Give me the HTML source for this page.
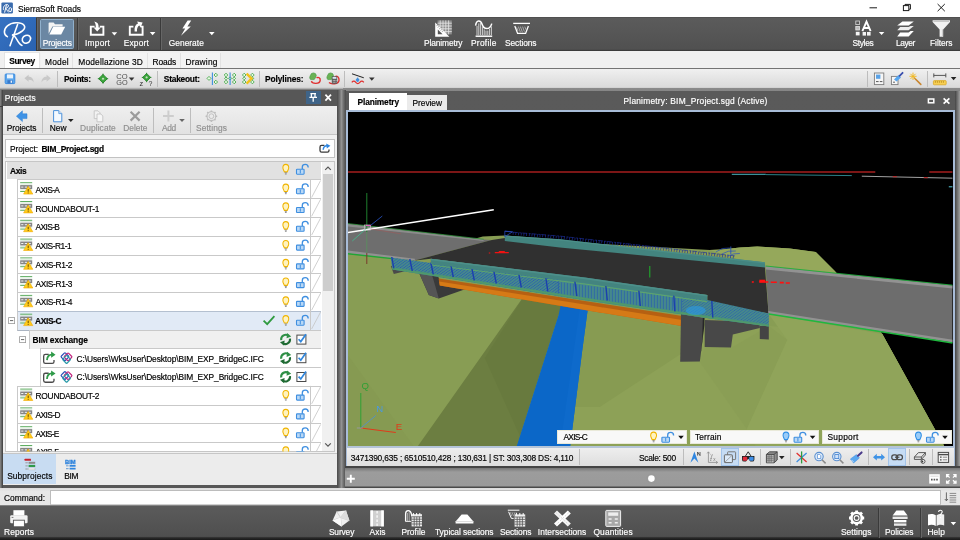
<!DOCTYPE html>
<html>
<head>
<meta charset="utf-8">
<title>SierraSoft Roads</title>
<style>
*{box-sizing:border-box;margin:0;padding:0}
html,body{width:960px;height:540px;overflow:hidden;background:#575757}
body{font-family:"Liberation Sans",sans-serif;font-size:11px;color:#000;position:relative}
.a{position:absolute}
.t{position:absolute;white-space:nowrap;line-height:14px;height:14px;font-size:8.4px;-webkit-text-stroke:0.17px}
.w{color:#fff}
.b{font-weight:bold}
.g{color:#8f8f8f}
.clipf{clip-path:inset(0 0 8.1px 0)}
.sep{position:absolute;width:1px;background:#bdbdbd}
.dsep{position:absolute;background:#3a3a3a;border-right:1px solid #666;width:2px}
/* tree */
.row{position:absolute;left:17px;width:304px;height:19px;background:#fff;border-top:1px solid #c9c9c9;border-left:1px solid #c9c9c9}
.row .t{top:3px}
svg{position:absolute;overflow:visible}
</style>
</head>
<body>

<!-- ===== TITLE BAR ===== -->
<div class="a" id="titlebar" style="left:0;top:0;width:960px;height:17px;background:#fff"></div>

<!-- ===== RIBBON ===== -->
<div class="a" id="ribbon" style="left:0;top:17px;width:960px;height:34px;background:linear-gradient(#454545 0,#5b5b5b 3%,#565656 50%,#505050 95%,#3c3c3c 98%,#3a3a3a 100%)"></div>
<div class="a" style="left:0;top:17px;width:35.5px;height:33.6px;background:linear-gradient(135deg,#3672c2,#2a62b0)"></div>
<div class="a" style="left:40px;top:19px;width:34px;height:30px;background:#6b87a3;border:1px solid #90b0cc;border-radius:1.5px"></div>
<div class="dsep" style="left:36px;top:18px;height:32px"></div>
<div class="dsep" style="left:77px;top:18px;height:32px"></div>
<div class="dsep" style="left:160px;top:18px;height:32px"></div>

<!-- ===== TAB ROW ===== -->
<div class="a" id="tabrow" style="left:0;top:51px;width:960px;height:17.8px;background:#f0f0f0;border-bottom:0.9px solid #747474"></div>
<div class="a" style="left:3.6px;top:52.4px;width:36.6px;height:15.5px;background:#fff;border:1px solid #e4e4e4;border-bottom:none"></div>
<div class="a" style="left:41px;top:53px;width:32px;height:15px;background:#f3f3f3;border-right:1px solid #e2e2e2"></div>
<div class="a" style="left:73px;top:53px;width:75px;height:15px;background:#f3f3f3;border-right:1px solid #e2e2e2"></div>
<div class="a" style="left:148px;top:53px;width:33px;height:15px;background:#f3f3f3;border-right:1px solid #e2e2e2"></div>
<div class="a" style="left:181px;top:53px;width:40px;height:15px;background:#f3f3f3;border-right:1px solid #e2e2e2"></div>

<!-- ===== TOOLBAR ===== -->
<div class="a" id="toolbar" style="left:0;top:68.8px;width:960px;height:21.2px;background:linear-gradient(#f0f0f0 0,#dadada 87%,#b0b0b0 93%,#6a6a6a 100%)"></div>
<div class="sep" style="left:57px;top:71px;height:16px"></div>
<div class="sep" style="left:157px;top:71px;height:16px"></div>
<div class="sep" style="left:259px;top:71px;height:16px"></div>
<div class="sep" style="left:344px;top:71px;height:16px"></div>
<div class="sep" style="left:867px;top:71px;height:16px"></div>
<div class="sep" style="left:927px;top:71px;height:16px"></div>

<!-- ===== LEFT DOCK PANEL ===== -->
<div class="a" id="lpanel" style="left:0;top:90px;width:338px;height:398px;background:#575757"></div>
<div class="a" style="left:0;top:90px;width:3px;height:398px;background:linear-gradient(90deg,#8a8a8a,#3c3c3c)"></div>
<div class="a" style="left:0;top:105.5px;width:338px;height:1px;background:#3e3e3e"></div>
<div class="a" style="left:306px;top:91px;width:15px;height:13px;background:#3f6488"></div>
<!-- panel toolbar -->
<div class="a" style="left:3px;top:106px;width:334px;height:29px;background:linear-gradient(#efefef,#e2e2e2);border-bottom:1px solid #c4c4c4"></div>
<div class="sep" style="left:42px;top:108px;height:25px"></div>
<div class="sep" style="left:153px;top:108px;height:25px"></div>
<div class="sep" style="left:190px;top:108px;height:25px"></div>
<!-- panel body -->
<div class="a" style="left:3px;top:135px;width:334px;height:318px;background:#f0f0f0"></div>
<div class="a" style="left:5.4px;top:139.4px;width:329.4px;height:18.4px;background:#fff;border:1px solid #c2c2c2"></div>
<!-- tree list -->
<div class="a" id="tree" style="left:5.4px;top:160.6px;width:329.4px;height:291.4px;background:#fff;border:1px solid #c6c6c6;overflow:hidden"></div>
<div class="a" style="left:7px;top:162px;width:314px;height:17px;background:#e1e1e1"></div>
<!-- scrollbar -->
<div class="a" style="left:321.8px;top:162px;width:12.2px;height:289px;background:#f0f0f0"></div>
<div class="a" style="left:322.8px;top:174px;width:10.6px;height:116.8px;background:#cdcdcd"></div>

<!-- rows -->
<div class="row" style="top:179px"></div>
<div class="row" style="top:198px"></div>
<div class="row" style="top:217px"></div>
<div class="row" style="top:236px"></div>
<div class="row" style="top:255px"></div>
<div class="row" style="top:273px;height:20px"></div>
<div class="row" style="top:292px;height:20px"></div>
<div class="row" style="top:311px;background:#e1eaf6;border-top-color:#b4c0d0;border-bottom:1px solid #aab4c2;height:19.6px"></div>
<div class="row" style="top:330px;left:29px;width:292px;background:#f0f0f0"></div>
<div class="row" style="top:348px;left:40px;width:281px;height:20px"></div>
<div class="row" style="top:367px;left:40px;width:281px;height:20px"></div>
<div class="row" style="top:386px"></div>
<div class="row" style="top:405px"></div>
<div class="row" style="top:423px;height:20px"></div>
<div class="row" style="top:442px;height:9px;overflow:hidden"></div>

<!-- bottom tabs of panel -->
<div class="a" style="left:3px;top:453px;width:334px;height:31.5px;background:#ececec;border-top:1px solid #c6c6c6"></div>
<div class="a" style="left:3px;top:454px;width:53px;height:30px;background:#c8dcf2"></div>

<!-- ===== RIGHT DOC AREA ===== -->
<div class="a" id="rpanel" style="left:343px;top:88px;width:617px;height:400px;background:linear-gradient(#8a8a8a 0,#868686 2.6px,#5a5a5a 3.4px,#575757 100%)"></div>
<div class="a" style="left:955.4px;top:91px;width:4.6px;height:397px;background:linear-gradient(90deg,#444,#a0a0a0)"></div>
<div class="a" style="left:337.4px;top:90px;width:8.6px;height:398px;background:linear-gradient(90deg,#4a4a4a 0,#6a6a6a 25%,#929292 50%,#6a6a6a 75%,#4a4a4a 100%)"></div>
<div class="a" style="left:345px;top:466px;width:615px;height:22px;background:linear-gradient(#444 0,#444 1.6px,#7a7a7a 2.4px,#9c9c9c 6px,#9a9a9a 20px,#4a4a4a 21px,#4a4a4a 22px)"></div>
<div class="a" style="left:349px;top:93px;width:58px;height:17px;background:#fff"></div>
<div class="a" style="left:407px;top:95px;width:40px;height:15px;background:#ebebeb"></div>

<!-- viewport -->
<div class="a" id="vp" style="left:346.2px;top:110px;width:608.8px;height:338px;background:#000;border:2px solid #a8bcd8;border-bottom:2px solid #b4c4d8"></div>
<svg id="scene" style="left:348.2px;top:112px;will-change:transform" width="604.5" height="334" viewBox="348.2 112 604.5 334">
<defs>
<clipPath id="vc"><rect x="348.2" y="112" width="604.5" height="334"/></clipPath>
<pattern id="mesh" width="3.2" height="3.2" patternUnits="userSpaceOnUse" patternTransform="rotate(8)">
<path d="M0,3.2 L3.2,0" stroke="#2452b8" stroke-width="0.75"/>
</pattern>
<pattern id="bars" width="3" height="4" patternUnits="userSpaceOnUse" patternTransform="skewY(8)">
<rect x="0" y="0" width="0.9" height="4" fill="#2250b8"/>
</pattern>
<linearGradient id="gird" x1="0" y1="0" x2="0.12" y2="1">
<stop offset="0" stop-color="#d87f1e"/><stop offset="0.55" stop-color="#cf761a"/><stop offset="0.6" stop-color="#a85b12"/><stop offset="1" stop-color="#a05510"/>
</linearGradient>
</defs>
<g clip-path="url(#vc)">
<!-- terrain -->
<polygon points="348,246 470,240 483,236.5 505,235.5 600,244 710,250 722,249.5 740,247.5 757.5,246.5 790,248.5 816,252 835,271 860,300 882.5,334 946,449 348,449" fill="#889d54"/>
<!-- subtle terrain facets -->
<polygon points="348,355 416,449 348,449" fill="#869a52"/>
<polygon points="588,309 682,328 769,326 882.5,334 946,449 570,449 582.5,350" fill="#8da157"/>
<polygon points="588,309 682,328 681,354 600,407 575,407 582.5,350" fill="#879b52"/>
<polygon points="700,362 747,429 787.5,340 769,326 733,347 705,347" fill="#8a9e55"/>
<polygon points="769,314 882.5,334 946,449 757,449 747,429 787.5,340" fill="#90a45a"/>
<polygon points="710,250 722,249.5 740,247.5 757.5,246.5 790,248.5 816,252 835,271 860,300 766,268" fill="#95a85b"/>
<!-- dark wedge -->
<polygon points="527,292 416,449 516,449 558.75,315 563,303" fill="#6c7e41"/>
<polygon points="527,292 485,358 526,449 516,449 558.75,315 563,303" fill="#687a3e"/>
<!-- river -->
<polygon points="561,305 588,309 582.5,350 570,449 516,449 558.75,315" fill="#0b67c8"/>
<polygon points="580,308 588,309 582.5,350 570,449 560,449" fill="#0e6acb"/>
<!-- left gray road -->
<polygon points="348,223.75 483.75,239.5 492,240 415,260.5 348,253" fill="#6e6e6e"/>
<polygon points="348,223.75 483.75,239.5 483.75,241 348,226.4" fill="#8c8c8c"/>
<path d="M348,223.5 L484,239.3" stroke="#2f8f3a" stroke-width="0.8" fill="none"/>
<path d="M348,253.6 L392,258.2" stroke="#20a535" stroke-width="1.9" fill="none"/>
<polygon points="348,250.6 415,258.8 415,260.5 348,253" fill="#929292"/>
<!-- deck (dark asphalt) -->
<polygon points="492,240 505,238 560,246 765,266 768.75,313.5 707.5,302.5 707.5,295 560,275 431,258.75 415,260.5" fill="#303030"/>
<!-- far-side barrier -->
<polygon points="505,235.5 560,239.2 765,262.3 765.5,267.5 560,247.5 505,241" fill="#43847f"/>
<polygon points="505,235.5 560,239.2 765,262.3 765,263.6 560,240.6 505,237" fill="#4b8e88"/>
<path d="M513,233.4 L560,237.4 L735,257.2" stroke="#1c2e9c" stroke-width="2.8" stroke-dasharray="0.7 2" fill="none" opacity="0.9"/>
<path d="M513,232.2 L560,236.1 L735,255.9" stroke="#1c2e9c" stroke-width="0.7" stroke-dasharray="5 1.5 2 1" fill="none" opacity="0.9"/>
<path d="M505,231.2 L505,236.6 L512.5,232 Z M505,231.2 L513,231.8" stroke="#2444b0" stroke-width="0.8" fill="none"/>
<path d="M716,252 q6,-5 14,-4 M722,254 q6,-4 14,-3 M728,256 q6,-3 12,-2.5" stroke="#2a52c0" stroke-width="0.7" fill="none"/>
<path d="M731,246.5 L731,254" stroke="#2a52c0" stroke-width="0.9"/>
<!-- right gray road -->
<polygon points="765.75,266.25 953,285.5 953,342.5 768.75,313.75" fill="#6d6d6d"/>
<polygon points="765.75,266.25 953,285.5 953,288.4 766,269.6" fill="#929292"/>
<polygon points="768.5,311 953,339.8 953,342.5 768.75,313.75" fill="#929292"/>
<path d="M766,266 L953,285.2" stroke="#1fae3c" stroke-width="0.9" fill="none"/>
<path d="M769,314 L953,343" stroke="#1fb83e" stroke-width="1.4" fill="none"/>
<!-- left abutment -->
<polygon points="391,266 394,274 404,271.5 412,268" fill="#4a4a4a"/>
<polygon points="418,270 429,295 439,298.5 466,289 440,280 436,272" fill="#3a3a3a"/>
<polygon points="418,270 429,295 439,298.5 432,274" fill="#555"/>
<!-- orange girder -->
<polygon points="438.75,278.5 585,301 682.5,316 682,326 585,310 440,285.5" fill="#b66012"/>
<polygon points="439.3,281.4 585,304.6 682.3,320 682,326 585,310 440,285.5" fill="#d67a16"/>
<!-- right pier -->
<polygon points="681.2,314 680.4,361.8 700,361.4 702.8,340 704.5,318" fill="#484848"/>
<polygon points="700,361.4 704.6,325 704.6,318 703,318 702.4,340" fill="#262626"/>
<polygon points="704.9,320 704.9,347 731.2,347.4 733,334.5 760,328 760,322" fill="#484848"/>
<polygon points="760,326 760,339 769,339.5 769,326" fill="#444"/>
<!-- near-side railing band -->
<polygon points="391,257.5 431,263 585,282 707.5,300 769,313.5 769,326.6 707,318 585,300.2 392.5,269.6" fill="#468a8a"/>
<clipPath id="bl"><rect x="380" y="250" width="180" height="60"/></clipPath>
<clipPath id="br"><rect x="682" y="290" width="100" height="45"/></clipPath>
<g clip-path="url(#bl)" opacity="0.95"><polygon points="391,257.5 431,263 585,282 585,300.2 392.5,269.6" fill="url(#mesh)"/></g>
<g clip-path="url(#br)" opacity="0.75"><polygon points="585,282 707.5,300 769,313.5 769,326.6 707,318 585,300.2" fill="url(#mesh)"/></g>
<polygon points="556,281.5 684,298 684,313.6 556,296" fill="url(#bars)" opacity="0.75"/>
<path d="M431,265 L585,284 L707,301.6" stroke="#62a868" stroke-width="1.1" fill="none" opacity="0.9"/>
<polygon points="392.2,267 585,297.6 707,315.4 769,324.2 769,326.6 707,318 585,300.2 392.5,269.6" fill="#4a9276"/>
<!-- posts -->
<path d="M392,257 L394,268.5 M410,259 L412.5,271 M431,262.5 L433.5,274.5 M451,265 L453.5,277 M472,268 L474.5,280.5 M494,271 L496.5,283.5 M519,274 L521.5,287.5 M546,277.5 L548,291.5 M575,281 L577,296 M606,285.5 L607.5,300.5 M639,290 L640.5,306 M674,295 L675,311.5 M712,301 L713,318" stroke="#1b3fae" stroke-width="1.4" fill="none"/>
<!-- near-side top rail (teal barrier) -->
<polygon points="431,258.75 585,277.5 707.5,295 707.5,300.5 585,283 431,264" fill="#43847f"/>
<polygon points="431,258.75 585,277.5 707.5,295 707.5,296.6 585,279.2 431,260.3" fill="#4c8f8a"/>
<path d="M392.5,268.75 L585,298.75 L707,317 L769,326" stroke="#5aa35a" stroke-width="0.7" fill="none" opacity="0.8"/>
<!-- bright blue detail on railing -->
<ellipse cx="696" cy="310.5" rx="10" ry="4.5" fill="#2a9ae8" opacity="0.6"/>
<!-- red markers -->
<path d="M752,282 h2 M759.5,282 h9 M771,282.3 h6 M780,282.6 h4 M786,283 h4" stroke="#ff1010" stroke-width="1.6"/>
<path d="M759.5,281 h6" stroke="#ff1010" stroke-width="2.6"/>
<path d="M489,253 h1.5 M495,252.6 h14 M499,251.6 h6" stroke="#f01212" stroke-width="1.2"/>
<!-- small green tick on deck -->
<path d="M650,266 V277.5" stroke="#1fb52c" stroke-width="1"/>
<!-- horizon lines -->
<path d="M348,172 H875.5 M929.5,172 H953" stroke="#7c1616" stroke-width="1.8"/>
<path d="M732,174.3 H766" stroke="#55c8d6" stroke-width="0.9"/>
<path d="M766,174.6 L852,175.6" stroke="#2b8088" stroke-width="1"/>
<path d="M862,176.2 L953,178.2" stroke="#b4b4b4" stroke-width="0.9"/>
<path d="M893,176.6 h4 M924,177.6 h4" stroke="#b03030" stroke-width="1.4"/>
<path d="M949,186.8 h4" stroke="#55c8d6" stroke-width="1"/>
<!-- cursor/axes lines upper-left -->
<path d="M367,193 V232" stroke="#1e7f2e" stroke-width="1"/>
<path d="M367,232 V253" stroke="#5c8a60" stroke-width="1"/>
<path d="M367,253 V264" stroke="#7a3a2a" stroke-width="1"/>
<path d="M347.5,232.6 L494,209.8" stroke="#fff" stroke-width="1.5"/>
<path d="M370,226 L382.5,216" stroke="#2a55c8" stroke-width="0.8"/>
<path d="M352.5,241 L366,229" stroke="#3fbf8f" stroke-width="0.8"/>
<path d="M371,229 L401,233.8" stroke="#a05a5a" stroke-width="0.6"/>
<rect x="364.5" y="225" width="6" height="5" fill="none" stroke="#c9c9c9" stroke-width="0.7"/>
<path d="M366,225.5 h5" stroke="#e060c0" stroke-width="1"/>
<!-- gizmo -->
<path d="M361,428 V393" stroke="#2fa035" stroke-width="1"/>
<path d="M361,428 L376,415.5" stroke="#4a8fd8" stroke-width="0.8"/>
<path d="M361,428 L396,432.5" stroke="#e03a1a" stroke-width="1"/>
<path d="M357,428 h6" stroke="#9a9ab0" stroke-width="0.8"/>
<text x="361.6" y="389.4" font-family="Liberation Sans, sans-serif" font-size="9.6" fill="#2fa035">Q</text>
<text x="376.4" y="411.8" font-family="Liberation Sans, sans-serif" font-size="9.6" fill="#4a9ae0">N</text>
<text x="396" y="430.4" font-family="Liberation Sans, sans-serif" font-size="9.6" fill="#e03a1a">E</text>
</g>
</svg>


<!-- viewport status bar -->
<div class="a" id="vstatus" style="left:346.2px;top:448px;width:608.8px;height:18.2px;background:linear-gradient(#eeeeee,#dedede);border-left:1.6px solid #a8bcd8;border-right:1.6px solid #a8bcd8"></div>
<div class="sep" style="left:579px;top:449px;height:16px"></div>
<div class="sep" style="left:683px;top:449px;height:16px"></div>
<div class="sep" style="left:760px;top:449px;height:16px"></div>
<div class="sep" style="left:790px;top:449px;height:16px"></div>
<div class="sep" style="left:868px;top:449px;height:16px"></div>
<div class="sep" style="left:909px;top:449px;height:16px"></div>
<div class="sep" style="left:932px;top:449px;height:16px"></div>

<div class="a" style="left:721px;top:448px;width:18px;height:18px;background:#c6dcf4;border:1px solid #a3c4ea"></div>
<div class="a" style="left:888px;top:448px;width:18px;height:18px;background:#c6dcf4;border:1px solid #a3c4ea"></div>
<!-- dropdowns -->
<div class="a" style="left:557px;top:430px;width:130px;height:14px;background:#f8f8f8;border:1px solid #e9e9d9"></div>
<div class="a" style="left:690px;top:430px;width:129px;height:14px;background:#f8f8f8;border:1px solid #e9e9d9"></div>
<div class="a" style="left:822px;top:430px;width:130px;height:14px;background:#f8f8f8;border:1px solid #e9e9d9"></div>

<!-- ===== COMMAND ROW ===== -->
<div class="a" id="cmdrow" style="left:0;top:488px;width:960px;height:17.6px;background:linear-gradient(#dcdcdc,#e8e8e8 20%,#e6e6e6)"></div>
<div class="a" style="left:49.8px;top:490.2px;width:891px;height:15px;background:#fff;border:1px solid #bcbcbc;border-bottom-color:#d0d0d0"></div>

<!-- ===== BOTTOM RIBBON ===== -->
<div class="a" id="bribbon" style="left:0;top:505.2px;width:960px;height:34.8px;background:linear-gradient(#9a9a9a 0,#5a5a5a 1.4px,#5a5a5a 3px,#4f4f4f 31.4px,#2a2a2a 32.8px,#1a1a1a 34.8px)"></div>
<div class="dsep" style="left:878px;top:508px;height:30px"></div>
<div class="dsep" style="left:920px;top:508px;height:30px"></div>

<svg id="icons" style="left:0;top:0;will-change:transform" width="960" height="540" viewBox="0 0 960 540">
<defs>
<!-- reusable: yellow bulb, blue bulb, blue open lock, road+warning icon -->
<g id="bulbY" transform="scale(0.86,1)">
<path d="M0,-5 C2.6,-5 3.4,-3 3.4,-1.6 C3.4,0 2.2,1 1.7,2.4 L-1.7,2.4 C-2.2,1 -3.4,0 -3.4,-1.6 C-3.4,-3 -2.6,-5 0,-5 Z" fill="#fff3bf" stroke="#f0b400" stroke-width="1.2"/>
<path d="M-1.2,3.4 h2.4 M-1,4.6 h2" stroke="#7a7a7a" stroke-width="0.9" fill="none"/>
</g>
<g id="bulbB" transform="scale(0.86,1)">
<path d="M0,-5 C2.6,-5 3.4,-3 3.4,-1.6 C3.4,0 2.2,1 1.7,2.4 L-1.7,2.4 C-2.2,1 -3.4,0 -3.4,-1.6 C-3.4,-3 -2.6,-5 0,-5 Z" fill="#9accf8" stroke="#2f8fe6" stroke-width="1.2"/>
<path d="M-1.2,3.4 h2.4 M-1,4.6 h2" stroke="#7a7a7a" stroke-width="0.9" fill="none"/>
</g>
<g id="lock">
<rect x="0.5" y="5.6" width="7.6" height="5" rx="0.6" fill="#b9d8f6" stroke="#3f8fe0" stroke-width="1.1"/>
<path d="M4.3,6.4 v3.4" stroke="#3f8fe0" stroke-width="1"/>
<path d="M6.3,5.4 V3.4 C6.3,1 8,0.7 9.2,0.7 C10.8,0.7 12.2,1.6 12.2,3.8" fill="none" stroke="#3f8fe0" stroke-width="1.3"/>
</g>
<g id="road">
<path d="M0,0.6 h12" stroke="#5fae62" stroke-width="1"/>
<path d="M0,2 h12" stroke="#d7ead8" stroke-width="0.9"/>
<rect x="0" y="3" width="12" height="4" fill="#858585"/>
<path d="M1,5 h2.2 M4.6,5 h2.2 M8.4,5 h2.2" stroke="#f2f2f2" stroke-width="1"/>
<path d="M0,8 h12" stroke="#d7ead8" stroke-width="0.9"/>
<path d="M0,9.4 h5" stroke="#5fae62" stroke-width="1"/>
<path d="M8,4.2 L12.6,12 L3.4,12 Z" fill="#ffcc1a" stroke="#f0a800" stroke-width="0.6" stroke-linejoin="round"/>
<path d="M8,7 v2.6 M8,10.4 v0.9" stroke="#6b4a00" stroke-width="1"/>
</g>
<g id="sync" transform="scale(1.22)">
<path d="M-3.6,0.6 A3.8,3.8 0 0 1 2.6,-2.9" fill="none" stroke="#2e8f45" stroke-width="1.7"/>
<path d="M1.2,-5.2 L4.6,-2.4 L0.8,-0.9 Z" fill="#2e8f45"/>
<path d="M3.6,-0.6 A3.8,3.8 0 0 1 -2.6,2.9" fill="none" stroke="#1f6b33" stroke-width="1.7"/>
<path d="M-1.2,5.2 L-4.6,2.4 L-0.8,0.9 Z" fill="#1f6b33"/>
</g>
<g id="chk">
<rect x="0.5" y="0.5" width="9" height="9" fill="#fff" stroke="#4a4a4a" stroke-width="1"/>
<path d="M2.2,4.6 L4.4,7 L9.6,-0.4" fill="none" stroke="#2f86dd" stroke-width="1.7"/>
</g>
<g id="share" transform="scale(1.1)">
<path d="M5.2,2.4 H2.2 Q0.6,2.4 0.6,4 V9 Q0.6,10.6 2.2,10.6 H8.4 Q10,10.6 10,9 V7.4" fill="none" stroke="#4a4a4a" stroke-width="1.2"/>
<path d="M3.6,7.6 C3.8,4.6 5.6,2.6 8.2,2.6" fill="none" stroke="#2e9a48" stroke-width="1.6"/>
<path d="M7.4,-0.2 L11.4,2.6 L7.4,5.4 Z" fill="#2e9a48"/>
</g>
<g id="ifc" transform="scale(0.92)">
<rect x="-3.2" y="-3.2" width="6.4" height="6.4" rx="1" transform="translate(-1.6,-1.2) rotate(45)" fill="none" stroke="#2c4fb8" stroke-width="1.3"/>
<rect x="-3.2" y="-3.2" width="6.4" height="6.4" rx="1" transform="translate(1.8,-1) rotate(45)" fill="none" stroke="#c3267e" stroke-width="1.3"/>
<rect x="-3.2" y="-3.2" width="6.4" height="6.4" rx="1" transform="translate(0.2,1.8) rotate(45)" fill="none" stroke="#2a9aa8" stroke-width="1.3"/>
</g>
<path id="dd" d="M-2.8,-1.5 H2.8 L0,1.7 Z"/>
</defs>

<!-- ===== title bar ===== -->
<g transform="translate(-1.6,0.4)"><rect x="3" y="2" width="11.5" height="11" rx="1.2" fill="#3a6cae"/>
<path d="M5,9.4 C4.6,5.6 7,3.6 9.2,4.2 C11,4.8 9.8,7.4 7.2,8 M8,4.6 L6.2,12.2 M7.4,8 C8.8,8.6 8.8,11.4 10.2,11.6 M10.6,9 a1.3,1.5 0 1 0 2.4,0.6 a1.3,1.5 0 1 0 -2.4,-0.6" fill="none" stroke="#fff" stroke-width="1"/></g>
<path d="M869.5,7.8 h7.5" stroke="#1a1a1a" stroke-width="1"/>
<rect x="903.4" y="5.6" width="5.4" height="5" fill="none" stroke="#1a1a1a" stroke-width="1"/>
<path d="M905,5.4 V4.4 H910.4 V9.2 H909" fill="none" stroke="#1a1a1a" stroke-width="1"/>
<path d="M937.6,4 L944.8,11.2 M944.8,4 L937.6,11.2" stroke="#1a1a1a" stroke-width="1"/>

<!-- ===== ribbon ===== -->
<!-- Ro logo -->
<g fill="none" stroke="#fff" stroke-width="1.55" stroke-linecap="round">
<path d="M7.4,36.6 C3.6,35 3.2,29.4 7.4,25.8 C11.6,22.2 21,21.6 24,25.2 C26.6,28.6 21,33.6 12.6,35"/>
<path d="M17.6,24.4 L10,45.8"/>
<path d="M12.6,35 C16.4,35.4 17.4,44.2 22,45.4"/>
<path d="M22.4,38.6 C23.4,35.6 27.4,34.4 29.6,36.2 C31.6,38 30.2,42.2 27,43 C24,43.8 21.6,41.6 22.4,38.6 Z"/>
</g>
<!-- folder -->
<path d="M48.6,33.8 V23.2 Q48.6,22.4 49.4,22.4 H53.6 L55,24.2 H62.6 V26.4 H52.4 Z" fill="#f4f4f4"/>
<path d="M49.4,34.4 L53.2,26.8 H65.2 L61.2,34.4 Z" fill="#fff"/>
<!-- import -->
<path d="M94.6,26.6 H90.8 V34.8 H103.4 V26.6 H99.8" fill="none" stroke="#fff" stroke-width="1.9"/>
<path d="M94.2,21.6 C97.4,22 98.8,24.2 98.6,27.4 L100.8,27.4 L97.2,31.6 L93.6,27.4 L95.8,27.4 C95.8,25 95.4,23.2 94.2,21.6 Z" fill="#fff"/>
<use href="#dd" x="114.4" y="33.8" fill="#fff"/>
<!-- export -->
<path d="M133.4,26.6 H129.8 V34.8 H142.6 V26.6 H140.6" fill="none" stroke="#fff" stroke-width="1.9"/>
<path d="M134.6,31.4 C134.2,27.2 135.4,24.4 138,23.4 L137.2,21.4 L142.6,22.4 L140.6,27.4 L139.4,25.6 C137.6,26.4 136.8,28.6 137,31.4 Z" fill="#fff"/>
<use href="#dd" x="152.6" y="33.6" fill="#fff"/>
<!-- generate (lightning) -->
<path d="M187.6,20.6 L191.2,20.6 L187.4,26.4 L190.8,26.4 L181,35.8 L185.2,28.6 L182.4,28.6 Z" fill="#fff"/>
<use href="#dd" x="211.8" y="33.6" fill="#fff"/>
<!-- planimetry -->
<g>
<rect x="437.6" y="20.4" width="14.2" height="14" fill="#8e8e8e"/>
<path d="M440.2,20.4 v14 M443,20.4 v14 M445.8,20.4 v14 M448.6,20.4 v14 M437.6,23.2 h14.2 M437.6,26 h14.2 M437.6,28.8 h14.2 M437.6,31.6 h14.2" stroke="#e8e8e8" stroke-width="0.8"/>
<path d="M435.2,22.6 L435.2,36.8 L449.4,36.8 Z" fill="#fff"/>
<path d="M437.8,29.4 L437.8,34.2 L442.6,34.2 Z" fill="#555"/>
<path d="M436.4,25.8 l1.6,-1 M437.6,27.4 l1.6,-1 M439,29 l1.6,-1 M440.4,30.4 l1.6,-1 M441.8,31.8 l1.6,-1" stroke="#777" stroke-width="0.6"/>
</g>
<!-- profile -->
<g fill="none" stroke="#fff">
<path d="M475.6,25.6 C476.4,19.6 480.6,19.6 482.2,24.6 C483.8,29.6 489.6,30.6 491.8,23.6" stroke-width="1.5"/>
<path d="M477,26 v9 M478.8,23.4 v11.6 M480.6,23 v12 M482.4,26.6 v8.4 M484.2,29.4 v5.6 M486,30.6 v4.4 M487.8,30.6 v4.4 M489.6,29 v6 M491.4,26.4 v8.6" stroke-width="0.9" stroke="#dcdcdc"/>
<path d="M475.6,36.2 h16.6" stroke-width="1.5"/>
</g>
<!-- sections -->
<g fill="none" stroke="#fff">
<path d="M513.2,23.4 h16.8" stroke-width="1.3"/>
<path d="M514.8,26 L517.6,33.4 H525.6 L528.4,26" stroke-width="1.3"/>
<path d="M516.6,27.4 l1.4,3.6 M518.4,26.6 l2,5.6 M520.4,26.6 l2,5.6 M522.6,26.6 l1.8,5 M524.8,26.6 l1.2,3.2" stroke="#cfcfcf" stroke-width="0.7"/>
</g>
<!-- styles -->
<g>
<rect x="855.8" y="21" width="3.8" height="3.6" fill="none" stroke="#d8d8d8" stroke-width="0.8"/>
<rect x="855.8" y="26.4" width="3.8" height="3.6" fill="#bdbdbd" stroke="#e4e4e4" stroke-width="0.8"/>
<rect x="855.8" y="31.8" width="3.8" height="3.6" fill="#f4f4f4"/>
<path d="M862.4,31.2 L866.5,21.6 L870.6,31.2 M863.8,28 H869.2" fill="none" stroke="#fff" stroke-width="1.9"/>
<rect x="862.6" y="32" width="3.4" height="3.6" fill="#f4f4f4"/>
<rect x="867" y="32" width="3.6" height="3.6" fill="#f4f4f4"/>
</g>
<use href="#dd" x="881.6" y="33.4" fill="#fff"/>
<!-- layer -->
<g>
<path d="M902.4,21.4 H913.8 L908.6,25.4 H897.2 Z" fill="#fff"/>
<path d="M910.6,26 L913.8,26 L908.6,30.2 H897.2 L900.2,27 H908.6 Z" fill="#ededed"/>
<path d="M910.6,31 L913.8,31 L908.6,36.6 H897.2 L900.2,32.6 H908.6 Z" fill="#fff"/>
</g>
<!-- filters -->
<path d="M932.6,20.2 H950 V22 L943.2,29.6 V36.8 H939.6 V29.6 L932.6,22 Z" fill="#f2f2f2"/>
<path d="M933.4,21.4 H949.2" stroke="#bdbdbd" stroke-width="0.9"/>
<path d="M942.4,29.4 V36.6" stroke="#c9c9c9" stroke-width="1"/>

<!-- ===== toolbar icons ===== -->
<!-- save -->
<rect x="5.2" y="74" width="9.6" height="9.6" rx="0.8" fill="#5ba6ec" stroke="#3a8be0" stroke-width="1"/>
<rect x="7" y="74.4" width="6" height="4" fill="#e9f3fd"/>
<rect x="7.4" y="80.2" width="5.2" height="3.2" fill="#3a78c8"/>
<rect x="10.6" y="80.6" width="1.4" height="2.2" fill="#e9f3fd"/>
<!-- undo / redo (disabled) -->
<path d="M24.4,78.2 L28.6,74.8 V76.8 C31.6,76.8 33.6,78.6 33.6,82.4 C32.4,80.4 31,79.8 28.6,79.8 V81.8 Z" fill="#c6c6c6"/>
<path d="M50.8,78.2 L46.6,74.8 V76.8 C43.6,76.8 41.6,78.6 41.6,82.4 C42.8,80.4 44.2,79.8 46.6,79.8 V81.8 Z" fill="#c9c9c9"/>
<!-- points: green diamond -->
<g id="gdia">
<path d="M103,74.4 L107.4,78.7 L103,83 L98.6,78.7 Z" fill="#3aa83a" stroke="#1f7f24" stroke-width="0.8"/>
<circle cx="103" cy="78.7" r="1.5" fill="#bfe8b8" stroke="#1f7f24" stroke-width="0.5"/>
<path d="M103,73.6 v2 M103,81.8 v2 M97.8,78.7 h2 M106.2,78.7 h2" stroke="#1f7f24" stroke-width="0.8"/>
</g>
<!-- COGO -->
<text x="116.2" y="79" font-family="Liberation Sans, sans-serif" font-size="6.6" fill="#4f4f4f" textLength="11.4" lengthAdjust="spacingAndGlyphs">CO</text>
<text x="116.2" y="84.8" font-family="Liberation Sans, sans-serif" font-size="6.6" fill="#4f4f4f" textLength="11.4" lengthAdjust="spacingAndGlyphs">GO</text>
<use href="#dd" x="131.6" y="79" fill="#333"/>
<!-- point z? -->
<path d="M146.6,73.4 L150.6,77.4 L146.6,81.4 L142.6,77.4 Z" fill="#3aa83a" stroke="#1f7f24" stroke-width="0.8"/>
<circle cx="146.6" cy="77.4" r="1.4" fill="#bfe8b8" stroke="#1f7f24" stroke-width="0.5"/>
<path d="M146.6,72.8 v1.6 M146.6,80.6 v1.6 M141.8,77.4 h1.6 M149.8,77.4 h1.6" stroke="#1f7f24" stroke-width="0.8"/>
<text x="139.6" y="85.6" font-family="Liberation Sans, sans-serif" font-size="7.4" fill="#333">z</text>
<text x="148.4" y="85.8" font-family="Liberation Sans, sans-serif" font-size="7" fill="#333">?</text>
<!-- stakeout 1 -->
<g fill="#e9f8e4" stroke="#35a23b" stroke-width="0.8">
<path d="M209,76.4 l2,2 l-2,2 l-2,-2 Z M215.8,73.2 l1.8,1.8 l-1.8,1.8 l-1.8,-1.8 Z M215.8,80.2 l1.8,1.8 l-1.8,1.8 l-1.8,-1.8 Z"/>
</g>
<path d="M212.4,72.4 V85" stroke="#3f8fe0" stroke-width="1.1"/>
<!-- stakeout 2 -->
<g fill="#e9f8e4" stroke="#35a23b" stroke-width="0.8">
<path d="M226,73.2 l1.8,1.8 l-1.8,1.8 l-1.8,-1.8 Z M226,80.2 l1.8,1.8 l-1.8,1.8 l-1.8,-1.8 Z M234.2,73.2 l1.8,1.8 l-1.8,1.8 l-1.8,-1.8 Z M234.2,80.2 l1.8,1.8 l-1.8,1.8 l-1.8,-1.8 Z M230.1,76.8 l1.6,1.6 l-1.6,1.6 l-1.6,-1.6 Z M226,77 l1.4,1.4 l-1.4,1.4 l-1.4,-1.4 Z M234.2,77 l1.4,1.4 l-1.4,1.4 l-1.4,-1.4 Z"/>
</g>
<path d="M230.1,72.4 V85" stroke="#3f8fe0" stroke-width="1.1"/>
<!-- stakeout 3 -->
<g fill="#e9f8e4" stroke="#35a23b" stroke-width="0.8">
<path d="M244.2,73.2 l1.8,1.8 l-1.8,1.8 l-1.8,-1.8 Z M244.2,80.2 l1.8,1.8 l-1.8,1.8 l-1.8,-1.8 Z M252.4,73.2 l1.8,1.8 l-1.8,1.8 l-1.8,-1.8 Z M252.4,80.2 l1.8,1.8 l-1.8,1.8 l-1.8,-1.8 Z M244.2,77 l1.4,1.4 l-1.4,1.4 l-1.4,-1.4 Z M252.4,77 l1.4,1.4 l-1.4,1.4 l-1.4,-1.4 Z"/>
</g>
<path d="M246.6,73.6 L251.6,78.6 L246.6,83.6" fill="none" stroke="#f2c21a" stroke-width="2.4"/>
<!-- polylines 1 -->
<path d="M311.4,73.6 q2,-1.4 4,0 q1.6,1.6 0.4,3.6 l-1.6,2.4 h-3.6 q-1.6,-1.6 -0.6,-3.4 Z" fill="#6ab254" stroke="#3f9540" stroke-width="0.6"/>
<path d="M311.4,81.2 C312,84 319.8,84.4 320.2,80.4 C320.6,77.4 317.6,76.8 316.6,78" fill="none" stroke="#e03030" stroke-width="1.4"/>
<!-- polylines 2 -->
<path d="M328.6,73.6 q2,-1.4 4,0 q1.6,1.6 0.4,3.6 l-1.6,2.4 h-3.6 q-1.6,-1.6 -0.6,-3.4 Z" fill="#6ab254" stroke="#3f9540" stroke-width="0.6"/>
<path d="M329,82.6 C331,84.6 338.6,84.4 339,80.4 C339.4,76.6 336.6,75.6 335.4,76.6" fill="none" stroke="#e03030" stroke-width="1.4"/>
<rect x="331.8" y="76.2" width="5.4" height="7.6" rx="0.6" fill="#5a5a5a"/>
<rect x="332.6" y="77" width="3.8" height="1.8" fill="#d9e6f2"/>
<path d="M332.8,80.4 h0.9 M334.2,80.4 h0.9 M335.6,80.4 h0.9 M332.8,82.2 h0.9 M334.2,82.2 h0.9 M335.6,82.2 h0.9" stroke="#e8e8e8" stroke-width="0.8"/>
<!-- slope tool -->
<path d="M352,73.8 L363.8,77.8" stroke="#222" stroke-width="1"/>
<path d="M351.8,82.4 q2,-2.4 4,0 q2,2.4 4,0 q2,-2.4 4,0" fill="none" stroke="#e03030" stroke-width="1.2"/>
<path d="M357.6,77.2 l2.2,3 h-4.4 Z" fill="#3f8fe0"/>
<circle cx="357.6" cy="80.6" r="1.4" fill="#3f8fe0"/>
<use href="#dd" x="371.8" y="79" fill="#333"/>
<!-- right tool group -->
<rect x="874.4" y="73" width="9.4" height="11.6" fill="#f6f6f6" stroke="#7d7d7d" stroke-width="0.9"/>
<rect x="876" y="74.6" width="4.4" height="4.2" fill="#5aa2e6"/>
<path d="M876,81.6 h2.6 M879.8,81.6 h2.6" stroke="#555" stroke-width="1"/>
<rect x="891.4" y="76.4" width="6.6" height="8.2" fill="#f6f6f6" stroke="#7d7d7d" stroke-width="0.9"/>
<path d="M893,82.2 h2" stroke="#555" stroke-width="0.9"/>
<path d="M894,79.6 L898.4,75 L901,77.6 L896.6,81.4 Z" fill="#58a6ee"/>
<path d="M899.6,75.8 L902.6,72.8" stroke="#3a4fae" stroke-width="1.8" stroke-linecap="round"/>
<path d="M914.4,78 L920.8,84.4" stroke="#c9862f" stroke-width="1.6" stroke-linecap="round"/>
<path d="M913,72.6 v7.4 M909.4,76.3 h7.2 M910.4,73.8 l5.2,5.2 M915.6,73.8 l-5.2,5.2" stroke="#f2b71a" stroke-width="0.9"/>
<!-- ruler -->
<rect x="933.4" y="80.6" width="12.8" height="4.2" rx="0.8" fill="#f7cf52" stroke="#d9a31a" stroke-width="0.7"/>
<path d="M935.4,81 v1.8 M937.4,81 v1.8 M939.4,81 v1.8 M941.4,81 v1.8 M943.4,81 v1.8" stroke="#a87a10" stroke-width="0.6"/>
<path d="M933.8,75.4 H945.8 M933.8,73.4 v4 M945.8,73.4 v4" stroke="#555" stroke-width="1" fill="none"/>
<use href="#dd" x="953.6" y="78.6" fill="#222"/>
<!-- ===== left panel header icons ===== -->
<path d="M310.4,93.6 h5.6 M311.4,93.6 v3.6 M315,93.6 v3.6 M309.4,97.4 h7.6 M313.2,97.4 v4.4" stroke="#fff" stroke-width="1.3" fill="none"/>
<path d="M325.4,94.6 L331,100.6 M331,94.6 L325.4,100.6" stroke="#fff" stroke-width="1.7"/>
<!-- panel toolbar -->
<path d="M16.4,116.2 L22.4,110.8 V113.8 H27 V118.6 H22.4 V121.6 Z" fill="#3f93e6" stroke="#2f7fd0" stroke-width="0.5"/>
<path d="M53.6,110.6 H58.8 L61.8,113.6 V121.8 H53.6 Z" fill="#f4f9fe" stroke="#4a90d9" stroke-width="1"/>
<path d="M58.8,110.6 V113.6 H61.8" fill="#cfe2f6" stroke="#4a90d9" stroke-width="0.8"/>
<use href="#dd" x="70.8" y="120.4" fill="#222"/>
<path d="M94.2,110.8 H98 L100,112.8 V118.6 H94.2 Z" fill="#f2f2f2" stroke="#c4c4c4" stroke-width="0.9"/>
<path d="M97,114 H100.8 L102.8,116 V121.8 H97 Z" fill="#f6f6f6" stroke="#c4c4c4" stroke-width="0.9"/>
<path d="M130.6,111.8 L139.6,120.6 M139.6,111.8 L130.6,120.6" stroke="#9c9c9c" stroke-width="2.2"/>
<path d="M168.4,110.6 V121.6 M163,116.1 H173.8" stroke="#cdcdcd" stroke-width="2"/>
<use href="#dd" x="182" y="120.4" fill="#666"/>
<g fill="none" stroke="#bdbdbd">
<circle cx="211.4" cy="116.2" r="4.4" stroke-width="1.1"/>
<circle cx="211.4" cy="116.2" r="2.4" stroke-width="0.9"/>
<path d="M211.4,110.4 v1.6 M211.4,120.4 v1.6 M205.6,116.2 h1.6 M215.6,116.2 h1.6 M207.3,112.1 l1.1,1.1 M214.4,119.2 l1.1,1.1 M215.5,112.1 l-1.1,1.1 M208.4,119.2 l-1.1,1.1" stroke-width="1.6"/>
</g>
<!-- project field share icon -->
<path d="M324.4,145.4 H321.6 Q320,145.4 320,147 V150.6 Q320,152.2 321.6,152.2 H327.4 Q329,152.2 329,150.6 V149.6" fill="none" stroke="#3a3a3a" stroke-width="1.3"/>
<path d="M323.2,149.8 C323.4,147.2 325,145.8 327,145.8" fill="none" stroke="#2f86e0" stroke-width="1.5"/>
<path d="M326.2,143.4 L330.4,145.8 L326.8,148.6 Z" fill="#2f86e0"/>
<!-- scrollbar arrows -->
<path d="M325.2,169.8 L328,167 L330.8,169.8" fill="none" stroke="#555" stroke-width="1.2"/>
<path d="M325.2,443.4 L328,446.2 L330.8,443.4" fill="none" stroke="#555" stroke-width="1.2"/>
<!-- header row icons -->
<use href="#bulbY" x="285.8" y="169.4"/>
<use href="#lock" x="296" y="163.6"/>
<!-- tree rows: road icons, bulbs, locks, diagonal cells -->
<clipPath id="treeclip"><rect x="6" y="161" width="316" height="290.4"/></clipPath>
<g id="rowicons" clip-path="url(#treeclip)">
<use href="#road" x="20.2" y="182.1"/>
<use href="#bulbY" x="285.8" y="189.1"/>
<use href="#lock" x="296" y="183.1"/>
<path d="M311.6,197.5 L320.6,180.5" stroke="#c4c4c4" stroke-width="0.8"/><path d="M310.5,179.5 v19" stroke="#c9c9c9" stroke-width="1"/>
<use href="#road" x="20.2" y="200.9"/>
<use href="#bulbY" x="285.8" y="207.9"/>
<use href="#lock" x="296" y="201.9"/>
<path d="M311.6,216.3 L320.6,199.3" stroke="#c4c4c4" stroke-width="0.8"/><path d="M310.5,198.3 v19" stroke="#c9c9c9" stroke-width="1"/>
<use href="#road" x="20.2" y="219.7"/>
<use href="#bulbY" x="285.8" y="226.7"/>
<use href="#lock" x="296" y="220.7"/>
<path d="M311.6,235.1 L320.6,218.1" stroke="#c4c4c4" stroke-width="0.8"/><path d="M310.5,217.1 v19" stroke="#c9c9c9" stroke-width="1"/>
<use href="#road" x="20.2" y="238.5"/>
<use href="#bulbY" x="285.8" y="245.5"/>
<use href="#lock" x="296" y="239.5"/>
<path d="M311.6,253.9 L320.6,236.9" stroke="#c4c4c4" stroke-width="0.8"/><path d="M310.5,235.9 v19" stroke="#c9c9c9" stroke-width="1"/>
<use href="#road" x="20.2" y="257.3"/>
<use href="#bulbY" x="285.8" y="264.3"/>
<use href="#lock" x="296" y="258.3"/>
<path d="M311.6,272.7 L320.6,255.7" stroke="#c4c4c4" stroke-width="0.8"/><path d="M310.5,254.7 v19" stroke="#c9c9c9" stroke-width="1"/>
<use href="#road" x="20.2" y="276.0"/>
<use href="#bulbY" x="285.8" y="283.0"/>
<use href="#lock" x="296" y="277.0"/>
<path d="M311.6,291.4 L320.6,274.4" stroke="#c4c4c4" stroke-width="0.8"/><path d="M310.5,273.4 v19" stroke="#c9c9c9" stroke-width="1"/>
<use href="#road" x="20.2" y="294.8"/>
<use href="#bulbY" x="285.8" y="301.8"/>
<use href="#lock" x="296" y="295.8"/>
<path d="M311.6,310.2 L320.6,293.2" stroke="#c4c4c4" stroke-width="0.8"/><path d="M310.5,292.2 v19" stroke="#c9c9c9" stroke-width="1"/>
<use href="#road" x="20.2" y="313.6"/>
<use href="#bulbY" x="285.8" y="320.6"/>
<use href="#lock" x="296" y="314.6"/>
<path d="M311.6,329.0 L320.6,312.0" stroke="#c4c4c4" stroke-width="0.8"/><path d="M310.5,311.0 v19" stroke="#c9c9c9" stroke-width="1"/>
<use href="#road" x="20.2" y="388.5"/>
<use href="#bulbY" x="285.8" y="395.5"/>
<use href="#lock" x="296" y="389.5"/>
<path d="M311.6,403.9 L320.6,386.9" stroke="#c4c4c4" stroke-width="0.8"/><path d="M310.5,385.9 v19" stroke="#c9c9c9" stroke-width="1"/>
<use href="#road" x="20.2" y="407.3"/>
<use href="#bulbY" x="285.8" y="414.3"/>
<use href="#lock" x="296" y="408.3"/>
<path d="M311.6,422.7 L320.6,405.7" stroke="#c4c4c4" stroke-width="0.8"/><path d="M310.5,404.7 v19" stroke="#c9c9c9" stroke-width="1"/>
<use href="#road" x="20.2" y="426.1"/>
<use href="#bulbY" x="285.8" y="433.1"/>
<use href="#lock" x="296" y="427.1"/>
<path d="M311.6,441.5 L320.6,424.5" stroke="#c4c4c4" stroke-width="0.8"/><path d="M310.5,423.5 v19" stroke="#c9c9c9" stroke-width="1"/>
<use href="#road" x="20.2" y="444.9"/>
<use href="#bulbY" x="285.8" y="451.9"/>
<use href="#lock" x="296" y="445.9"/>
<path d="M311.6,460.3 L320.6,443.3" stroke="#c4c4c4" stroke-width="0.8"/><path d="M310.5,442.3 v19" stroke="#c9c9c9" stroke-width="1"/>
</g>
<!-- AXIS-C check -->
<path d="M263.6,320.6 L267.2,324.2 L274.4,316.2" fill="none" stroke="#2e9a3f" stroke-width="1.8"/>
<!-- expand boxes -->
<rect x="8.6" y="317.6" width="6" height="6" fill="#fff" stroke="#9a9a9a" stroke-width="0.8"/>
<path d="M10,320.6 h3.2" stroke="#555" stroke-width="0.9"/>
<rect x="19.6" y="336.6" width="6" height="6" fill="#fff" stroke="#9a9a9a" stroke-width="0.8"/>
<path d="M21,339.6 h3.2" stroke="#555" stroke-width="0.9"/>
<!-- BIM exchange row + file rows -->
<use href="#sync" x="285.6" y="339.4"/>
<use href="#chk" x="296.4" y="334.6"/>
<use href="#share" x="43" y="351.8"/>
<use href="#ifc" x="66.4" y="357.8"/>
<use href="#sync" x="285.6" y="358"/>
<use href="#chk" x="296.4" y="353.2"/>
<use href="#share" x="43" y="370.6"/>
<use href="#ifc" x="66.4" y="376.6"/>
<use href="#sync" x="285.6" y="376.8"/>
<use href="#chk" x="296.4" y="372"/>
<!-- bottom tabs icons -->
<rect x="24.6" y="458.8" width="6.4" height="2" rx="0.4" fill="#c8202c"/>
<rect x="28.6" y="461.8" width="6.6" height="2" fill="#8a8a8a"/>
<rect x="25.4" y="462.3" width="2.4" height="1" fill="#9a9a9a"/>
<rect x="28.6" y="464.9" width="6.6" height="2.1" fill="#2f9a4a"/>
<rect x="25.4" y="465.4" width="2.4" height="1" fill="#9a9a9a"/>
<rect x="28.8" y="468" width="6.2" height="1.9" fill="#f8f8f8" stroke="#b0b0b0" stroke-width="0.5"/>
<rect x="25.4" y="468.5" width="2.4" height="1" fill="#9a9a9a"/>
<text x="65" y="464" font-family="Liberation Sans, sans-serif" font-size="5.8" font-weight="bold" fill="#2a80dc" stroke="#2a80dc" stroke-width="0.3" textLength="10.6" lengthAdjust="spacingAndGlyphs">BIM</text>
<rect x="69.6" y="465" width="6" height="1.7" fill="#2f86e0"/>
<rect x="66" y="465.2" width="2.6" height="1.2" fill="#7aa8d8"/>
<rect x="69.6" y="467.8" width="6" height="1.7" fill="#2f86e0"/>
<rect x="66" y="468" width="2.6" height="1.2" fill="#7aa8d8"/>
<!-- viewport header icons -->
<rect x="928.4" y="99" width="5.4" height="3.8" fill="none" stroke="#fff" stroke-width="1.5"/>
<path d="M943.6,98.4 L949.4,103.6 M949.4,98.4 L943.6,103.6" stroke="#fff" stroke-width="1.7"/>
<!-- dropdown icons -->
<use href="#bulbY" x="653.6" y="437.2"/>
<use href="#lock" x="661.4" y="431.6"/>
<use href="#dd" x="681" y="437.2" fill="#111"/>
<use href="#bulbB" x="786" y="437.2"/>
<use href="#lock" x="793.6" y="431.6"/>
<use href="#dd" x="812.6" y="437.2" fill="#111"/>
<use href="#bulbB" x="918.4" y="437.2"/>
<use href="#lock" x="926" y="431.6"/>
<use href="#dd" x="945" y="437.2" fill="#111"/>
<!-- ===== viewport status bar icons ===== -->
<path d="M690.4,462.8 L694.4,451.6 L698.4,462.8 L694.4,458.6 Z" fill="#2f86e0"/>
<path d="M697.6,455.6 v-3.6 l2.4,3.6 v-3.6" fill="none" stroke="#3a3a3a" stroke-width="0.8"/>
<path d="M708.4,452 V462.4 H717.4 M716,461.2 l1.6,1.2 l-1.6,1.2 M707.2,453.4 l1.2,-1.6 l1.2,1.6" fill="none" stroke="#8a8a8a" stroke-width="0.8"/>
<text x="710.6" y="456.6" font-family="Liberation Sans, sans-serif" font-size="4.6" fill="#7a7a7a">y</text>
<text x="709.8" y="461.2" font-family="Liberation Sans, sans-serif" font-size="4.6" fill="#7a7a7a">z x</text>
<rect x="727.6" y="451.8" width="8" height="7.8" rx="0.6" fill="none" stroke="#7a7a7a" stroke-width="1"/>
<rect x="724.4" y="454.8" width="8" height="7.8" rx="0.6" fill="#dbe9f8" stroke="#6a6a6a" stroke-width="1"/>
<path d="M725,462 L732,455.4" stroke="#8a8a8a" stroke-width="0.7"/>
<path d="M745.2,456.4 L748.2,451.8 L751.2,456.4" fill="none" stroke="#222" stroke-width="0.9"/>
<path d="M742,456 H754.4 V459.4 Q754.4,461.6 752.2,461.6 H750.4 L748.2,458.8 L746,461.6 H744.2 Q742,461.6 742,459.4 Z" fill="#222"/>
<rect x="742.8" y="456.8" width="4.4" height="4" rx="1" fill="#e02a3a"/>
<rect x="749.2" y="456.8" width="4.4" height="4" rx="1" fill="#3f8fe8"/>
<g>
<path d="M766.4,454.4 L769.6,451.8 H777.2 V460 L774,462.8 H766.4 Z" fill="#8e8e8e" stroke="#444" stroke-width="0.9"/>
<path d="M766.4,454.4 H774 V462.8 M774,454.4 L777.2,451.8" fill="none" stroke="#444" stroke-width="0.9"/>
<rect x="767" y="455" width="6.6" height="7.4" fill="#b8b8b8"/>
<path d="M768.2,455 v7.4 M769.8,455 v7.4 M771.4,455 v7.4 M767,456.8 h6.6 M767,458.6 h6.6 M767,460.4 h6.6" stroke="#5a5a5a" stroke-width="0.5"/>
</g>
<use href="#dd" x="781.8" y="457.6" fill="#222"/>
<path d="M796.6,453 L806.6,462 " stroke="#e03030" stroke-width="1.3"/>
<path d="M806.6,453 L796.6,462" stroke="#3f8fe0" stroke-width="1.3"/>
<path d="M801.6,451.4 V463.4" stroke="#2e9a3f" stroke-width="1.3"/>
<g fill="none">
<circle cx="819" cy="456.6" r="4.2" fill="#e6f0fb" stroke="#5a8fd0" stroke-width="1.1"/>
<path d="M822,459.8 L825.6,463.4" stroke="#8a8a8a" stroke-width="1.5"/>
<path d="M817.4,454.4 h2.2 l1.2,1.2 v3 h-3.4 Z" fill="#fff" stroke="#3f7fd0" stroke-width="0.7"/>
<circle cx="836.8" cy="456.6" r="4.2" fill="#e6f0fb" stroke="#5a8fd0" stroke-width="1.1"/>
<path d="M839.8,459.8 L843.4,463.4" stroke="#8a8a8a" stroke-width="1.5"/>
<rect x="834.8" y="454.6" width="4" height="4" fill="#cfe2f8" stroke="#3f7fd0" stroke-width="0.8"/>
</g>
<path d="M850.4,459 L856.4,454.6 L859.4,458 L853.6,463 Z" fill="#5aa8f0" stroke="#3f8fe0" stroke-width="0.5"/>
<path d="M851.6,460 l2,2" stroke="#fff" stroke-width="0.6"/>
<path d="M858,455.8 L861.6,452.4" stroke="#4a3a8a" stroke-width="2" stroke-linecap="round"/>
<path d="M873,457.2 L876.8,453.8 V455.9 H881.2 V453.8 L885,457.2 L881.2,460.6 V458.5 H876.8 V460.6 Z" fill="#3f93e6"/>
<g fill="none" stroke="#4a4a4a" stroke-width="1.25">
<rect x="891.8" y="454.8" width="5.6" height="4.8" rx="2.2"/>
<rect x="896.8" y="454.8" width="5.6" height="4.8" rx="2.2"/>
</g>
<path d="M895,457.2 h4.4" stroke="#4a4a4a" stroke-width="1.2"/>
<g fill="none" stroke="#4a4a4a" stroke-width="0.9">
<path d="M914.4,457 L918.4,452.6 H925.4 L921.4,457 Z M914.4,457 V459.4 H921.4 V457 M921.4,459.4 L925.4,455 V452.6"/>
<circle cx="923" cy="461.4" r="2" fill="#fff"/>
</g>
<circle cx="922.4" cy="461.4" r="1" fill="#333"/>
<rect x="938.2" y="452.4" width="10.4" height="10" fill="#f4f4f4" stroke="#4a4a4a" stroke-width="1"/>
<path d="M938.2,454.6 h10.4" stroke="#4a4a4a" stroke-width="1.4"/>
<path d="M940,457.2 h1.6 M940,459.8 h1.6" stroke="#4a4a4a" stroke-width="1.2"/>
<path d="M942.8,457.2 h4.4 M942.8,459.8 h4.4" stroke="#8a8a8a" stroke-width="1"/>
<!-- bottom row of right panel -->
<path d="M346.8,478.8 h8 M350.8,474.8 v8" stroke="#fff" stroke-width="1.9"/>
<circle cx="651.4" cy="478.6" r="3.3" fill="#fff"/>
<circle cx="651.4" cy="478.6" r="4.6" fill="none" stroke="#9a9a9a" stroke-width="0.9"/>
<rect x="929.2" y="474.2" width="10.6" height="9.4" fill="#fff"/>
<path d="M931,479.6 h1.6 M933.6,479.6 h1.6 M936.2,479.6 h1.6" stroke="#555" stroke-width="1.6"/>
<path d="M930.4,476.2 h8.2" stroke="#cfcfcf" stroke-width="0.8"/>
<path d="M946.6,477.4 V474.6 H949.4 M953.2,474.6 H956 V477.4 M956,480.4 V483.2 H953.2 M949.4,483.2 H946.6 V480.4 M946.8,474.8 L949.6,477.6 M955.8,474.8 L953,477.6 M955.8,483 L953,480.2 M946.8,483 L949.6,480.2" fill="none" stroke="#fff" stroke-width="1.3"/>
<!-- command row right icon -->
<path d="M946.4,492.4 V500.6 M944.8,499 l1.6,1.8 l1.6,-1.8" fill="none" stroke="#5a5a5a" stroke-width="0.9"/>
<path d="M949.6,493.4 h6.6 M949.6,495.6 h6.6 M949.6,497.8 h6.6 M949.6,500 h6.6 M949.6,502.2 h6.6" stroke="#8a8a8a" stroke-width="1"/>
<!-- ===== bottom ribbon icons ===== -->
<!-- reports: printer -->
<rect x="13.4" y="510.2" width="11" height="5.4" fill="#fff"/>
<rect x="10.2" y="515.2" width="17.4" height="8" rx="1.2" fill="#f2f2f2"/>
<rect x="13.4" y="520.2" width="11" height="6.6" fill="#fff" stroke="#555" stroke-width="0.9"/>
<path d="M11.6,517.4 h1.8" stroke="#777" stroke-width="1"/>
<!-- survey polygon -->
<path d="M336.6,511.4 L346,510.4 L349.4,520.6 L341.4,526.6 L332.6,520.4 Z" fill="#f0f0f0"/>
<path d="M340.6,517.6 L336.6,511.4 M340.6,517.6 L346,510.4 M340.6,517.6 L349.4,520.6 M340.6,517.6 L341.4,526.6 M340.6,517.6 L332.6,520.4" stroke="#c4c4c4" stroke-width="0.7"/>
<path d="M340.6,517.6 L346,510.4 L349.4,520.6 Z" fill="#dcdcdc"/>
<path d="M340.6,517.6 L341.4,526.6 L332.6,520.4 Z" fill="#fafafa"/>
<!-- axis road -->
<rect x="370.4" y="510.4" width="13.4" height="16" fill="#d0d0d0"/>
<rect x="370.4" y="510.4" width="2.6" height="16" fill="#fff"/>
<rect x="381.2" y="510.4" width="2.6" height="16" fill="#fff"/>
<path d="M377.1,511 V526" stroke="#fff" stroke-width="1.2" stroke-dasharray="2.6 1.6"/>
<!-- profile -->
<g fill="none" stroke="#fff">
<path d="M405.6,521 V514 C405.6,509.6 410.6,509.6 411.4,514 L411.8,516.4" stroke-width="1.3"/>
<path d="M407.4,513 v8 M409.2,512 v9" stroke-width="0.7" stroke="#d0d0d0"/>
<path d="M405.2,521.4 h6" stroke-width="0.9"/>
</g>
<rect x="411.6" y="514.2" width="10.4" height="12.2" fill="#ededed"/>
<path d="M414.2,516.8 v9.6 M416.8,516.8 v9.6 M419.4,516.8 v9.6 M411.6,516.8 h10.4 M411.6,519.2 h10.4 M411.6,521.6 h10.4 M411.6,524 h10.4" stroke="#555" stroke-width="0.8"/>
<path d="M413.4,513 v2.4 M416.6,513 v2.4 M419.8,513 v2.4" stroke="#fff" stroke-width="1"/>
<!-- typical sections -->
<path d="M461.6,514.6 H467.4 L473.4,521.4 V523.6 H455.6 V521.4 Z" fill="#fff"/>
<path d="M455.6,521.6 H473.4" stroke="#cfcfcf" stroke-width="0.8"/>
<!-- sections -->
<g fill="none" stroke="#fff">
<path d="M507.8,510.2 h11.6" stroke-width="1"/>
<path d="M508.6,511.8 L511.4,518.4 H513.6" stroke-width="1"/>
<path d="M510.2,512.2 l1.6,4 M512,512.2 l1.6,4 M514,512.2 l1.2,3 M516,512.2 l0.8,2" stroke="#d6d6d6" stroke-width="0.6"/>
</g>
<rect x="514.6" y="514.4" width="10.6" height="12.2" fill="#ededed"/>
<path d="M517.2,517 v9.6 M519.8,517 v9.6 M522.4,517 v9.6 M514.6,517 h10.6 M514.6,519.4 h10.6 M514.6,521.8 h10.6 M514.6,524.2 h10.6" stroke="#555" stroke-width="0.8"/>
<path d="M516.4,513 v2.4 M519.8,513 v2.4 M523.2,513 v2.4" stroke="#fff" stroke-width="1"/>
<!-- intersections -->
<path d="M557,510.6 L570.8,523.4 L567.8,526.4 L554,513.6 Z" fill="#f4f4f4"/>
<path d="M567.8,510.6 L570.8,513.6 L557,526.4 L554,523.4 Z" fill="#fff"/>
<path d="M556,512.6 L568.8,524.8 M568.8,512.6 L556,524.8" stroke="#cfcfcf" stroke-width="0.8" stroke-dasharray="2 1.4"/>
<!-- quantities -->
<rect x="605.8" y="510.4" width="14.8" height="16" rx="0.8" fill="#a8a8a8" stroke="#f0f0f0" stroke-width="1"/>
<rect x="608.2" y="512.4" width="10" height="3.4" fill="#ededed"/>
<path d="M608.6,519 h3 M614.8,519 h3 M608.6,522.8 h3 M614.8,522.8 h3" stroke="#ededed" stroke-width="1.4"/>
<!-- settings gear -->
<g>
<circle cx="856.6" cy="518" r="5.2" fill="none" stroke="#fff" stroke-width="2.6"/>
<path d="M856.6,510.4 v2.6 M856.6,523 v2.6 M849,518 h2.6 M861.6,518 h2.6 M851.2,512.6 l1.9,1.9 M860.1,521.5 l1.9,1.9 M862,512.6 l-1.9,1.9 M853.1,521.5 l-1.9,1.9" stroke="#fff" stroke-width="2.8"/>
<circle cx="856.6" cy="518" r="2.4" fill="none" stroke="#fff" stroke-width="1.1"/>
</g>
<!-- policies -->
<path d="M896.4,510.4 H903.8 L907.6,515.6 H892.6 Z" fill="#fff"/>
<path d="M892.6,516.6 H907.6 V519 H892.6 Z" fill="#e9e9e9"/>
<path d="M894,520 H906.4 V522.4 H894 Z" fill="#fff"/>
<path d="M894,523.4 H906.4 V525.8 H894 Z" fill="#e9e9e9"/>
<!-- help -->
<path d="M928,514.6 C930.6,513.4 933.6,513.8 935.8,515.2 V526 C933.6,524.6 930.6,524.4 928,525.4 Z" fill="#fff"/>
<path d="M944.2,514.6 C941.6,513.4 938.6,513.8 936.6,515.2 V526 C938.6,524.6 941.6,524.4 944.2,525.4 Z" fill="#f0f0f0"/>
<path d="M938.6,512 C938.6,509.8 942.2,509.8 942.2,511.8 C942.2,513.4 940.4,513.4 940.4,515.4 M940.4,517 v1.2" fill="none" stroke="#fff" stroke-width="1.1"/>
<rect x="938.8" y="516.4" width="3" height="3.6" fill="#454545" opacity="0.0"/>
<use href="#dd" x="953.4" y="523.6" fill="#fff"/>

</svg>

<!-- text -->
<div id="textlayer" style="position:absolute;left:0;top:0;width:960px;height:540px;will-change:transform">
<span class="t" style="left:18.0px;top:2.1px;letter-spacing:-0.050px">SierraSoft Roads</span>
<span class="t w" style="left:42.8px;top:35.7px;letter-spacing:-0.169px">Projects</span>
<span class="t w" style="left:85.0px;top:35.7px;letter-spacing:0.227px">Import</span>
<span class="t w" style="left:123.8px;top:35.7px;letter-spacing:0.142px">Export</span>
<span class="t w" style="left:168.8px;top:35.7px;letter-spacing:0.010px">Generate</span>
<span class="t w" style="left:424.0px;top:35.7px;letter-spacing:-0.112px">Planimetry</span>
<span class="t w" style="left:471.0px;top:35.7px;letter-spacing:0.269px">Profile</span>
<span class="t w" style="left:505.0px;top:35.7px;letter-spacing:-0.083px">Sections</span>
<span class="t w" style="left:852.5px;top:35.7px;letter-spacing:-0.330px">Styles</span>
<span class="t w" style="left:896.0px;top:35.7px;letter-spacing:-0.434px">Layer</span>
<span class="t w" style="left:930.0px;top:35.7px;letter-spacing:-0.048px">Filters</span>
<span class="t b" style="left:9.2px;top:54.4px;letter-spacing:-0.389px">Survey</span>
<span class="t" style="left:45.0px;top:55.1px;letter-spacing:0.197px">Model</span>
<span class="t" style="left:78.3px;top:55.1px;letter-spacing:0.159px">Modellazione 3D</span>
<span class="t" style="left:152.5px;top:55.1px;letter-spacing:-0.160px">Roads</span>
<span class="t" style="left:185.5px;top:55.1px;letter-spacing:0.195px">Drawing</span>
<span class="t b" style="left:64.0px;top:71.9px;letter-spacing:-0.214px">Points:</span>
<span class="t b" style="left:163.8px;top:71.9px;letter-spacing:-0.232px">Stakeout:</span>
<span class="t b" style="left:265.0px;top:71.9px;letter-spacing:-0.112px">Polylines:</span>
<span class="t w" style="left:4.7px;top:90.7px;letter-spacing:0.111px">Projects</span>
<span class="t" style="left:6.7px;top:121.3px;letter-spacing:-0.089px">Projects</span>
<span class="t" style="left:49.7px;top:121.3px;letter-spacing:0.094px">New</span>
<span class="t g" style="left:80.0px;top:121.3px;letter-spacing:0.103px">Duplicate</span>
<span class="t g" style="left:123.3px;top:121.3px;letter-spacing:-0.003px">Delete</span>
<span class="t g" style="left:162.0px;top:121.3px;letter-spacing:-0.362px">Add</span>
<span class="t g" style="left:196.0px;top:121.3px;letter-spacing:0.098px">Settings</span>
<span class="t" style="left:10.0px;top:141.6px;letter-spacing:-0.054px">Project:</span>
<span class="t b" style="left:41.5px;top:141.6px;letter-spacing:-0.216px">BIM_Project.sgd</span>
<span class="t b" style="left:10.0px;top:164.1px;letter-spacing:-0.372px">Axis</span>
<span class="t" style="left:35.5px;top:182.8px;letter-spacing:-0.612px">AXIS-A</span>
<span class="t" style="left:35.5px;top:201.5px;letter-spacing:-0.239px">ROUNDABOUT-1</span>
<span class="t" style="left:35.5px;top:220.3px;letter-spacing:-0.612px">AXIS-B</span>
<span class="t" style="left:35.5px;top:239.1px;letter-spacing:-0.474px">AXIS-R1-1</span>
<span class="t" style="left:35.5px;top:257.8px;letter-spacing:-0.380px">AXIS-R1-2</span>
<span class="t" style="left:35.5px;top:276.6px;letter-spacing:-0.380px">AXIS-R1-3</span>
<span class="t" style="left:35.5px;top:295.4px;letter-spacing:-0.380px">AXIS-R1-4</span>
<span class="t b" style="left:35.0px;top:313.8px;letter-spacing:-0.362px">AXIS-C</span>
<span class="t b" style="left:32.5px;top:332.6px;letter-spacing:-0.089px">BIM exchange</span>
<span class="t" style="left:76.6px;top:351.6px;letter-spacing:-0.096px">C:\Users\WksUser\Desktop\BIM_EXP_BridgeC.IFC</span>
<span class="t" style="left:76.6px;top:370.4px;letter-spacing:-0.096px">C:\Users\WksUser\Desktop\BIM_EXP_BridgeC.IFC</span>
<span class="t" style="left:35.5px;top:388.8px;letter-spacing:-0.239px">ROUNDABOUT-2</span>
<span class="t" style="left:35.5px;top:407.7px;letter-spacing:-0.570px">AXIS-D</span>
<span class="t" style="left:35.5px;top:426.5px;letter-spacing:-0.740px">AXIS-E</span>
<span class="t clipf" style="left:35.5px;top:445.4px;letter-spacing:-0.636px">AXIS-F</span>
<span class="t" style="left:7.2px;top:469.1px;letter-spacing:0.092px">Subprojects</span>
<span class="t" style="left:64.3px;top:469.1px;letter-spacing:-0.316px">BIM</span>
<span class="t b" style="left:357.5px;top:95.0px;letter-spacing:-0.140px">Planimetry</span>
<span class="t" style="left:412.5px;top:96.3px;letter-spacing:-0.046px">Preview</span>
<span class="t w" style="left:623.5px;top:93.9px;letter-spacing:0.215px">Planimetry: BIM_Project.sgd (Active)</span>
<span class="t" style="left:350.7px;top:451.1px;letter-spacing:-0.170px">3471390,635 ; 6510510,428 ; 130,631 | ST: 303,308 DS: 4,110</span>
<span class="t" style="left:639.0px;top:451.1px;letter-spacing:-0.271px">Scale: 500</span>
<span class="t" style="left:563.5px;top:430.1px;letter-spacing:-0.716px">AXIS-C</span>
<span class="t" style="left:695.0px;top:430.1px;letter-spacing:0.137px">Terrain</span>
<span class="t" style="left:827.5px;top:430.1px;letter-spacing:0.255px">Support</span>
<span class="t" style="left:4.0px;top:490.9px;letter-spacing:0.004px">Command:</span>
<span class="t w" style="left:4.0px;top:525.1px;letter-spacing:0.103px">Reports</span>
<span class="t w" style="left:328.9px;top:525.1px;letter-spacing:-0.123px">Survey</span>
<span class="t w" style="left:369.6px;top:525.1px;letter-spacing:0.021px">Axis</span>
<span class="t w" style="left:401.4px;top:525.1px;letter-spacing:0.054px">Profile</span>
<span class="t w" style="left:435.0px;top:525.1px;letter-spacing:-0.040px">Typical sections</span>
<span class="t w" style="left:499.9px;top:525.1px;letter-spacing:-0.083px">Sections</span>
<span class="t w" style="left:537.8px;top:525.1px;letter-spacing:0.081px">Intersections</span>
<span class="t w" style="left:593.4px;top:525.1px;letter-spacing:0.166px">Quantities</span>
<span class="t w" style="left:841.0px;top:525.1px;letter-spacing:0.031px">Settings</span>
<span class="t w" style="left:885.0px;top:525.1px;letter-spacing:-0.048px">Policies</span>
<span class="t w" style="left:927.5px;top:525.1px;letter-spacing:0.076px">Help</span>
</div>
</body>
</html>
